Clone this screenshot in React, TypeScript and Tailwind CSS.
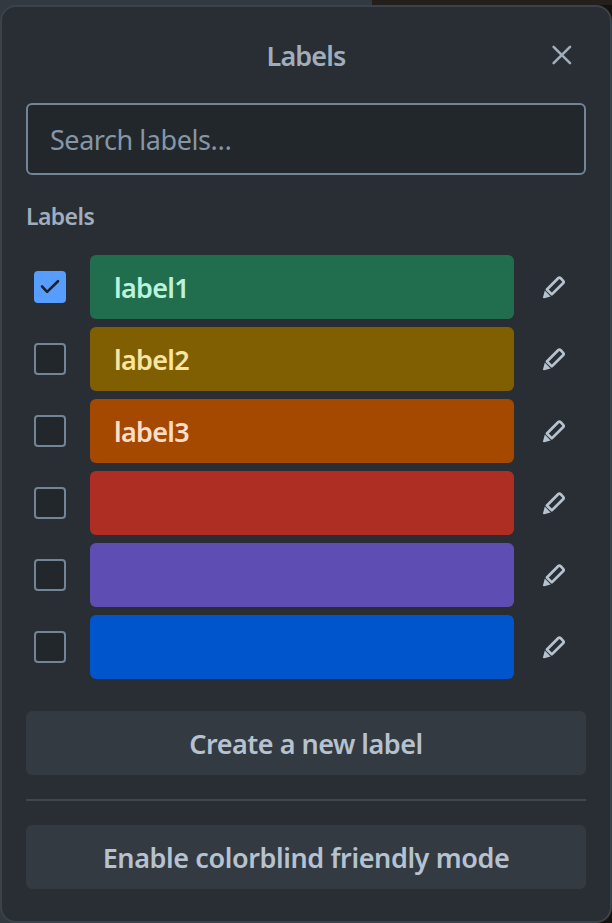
const font = "font-['Noto_Sans','Open_Sans',sans-serif]";

const labels = [
  { name: 'label1', checked: true, color: 'bg-[#216e4e] text-[#baf3db]' },
  { name: 'label2', checked: false, color: 'bg-[#7f5f01] text-[#f8e6a0]' },
  { name: 'label3', checked: false, color: 'bg-[#a54800] text-[#fedec8]' },
  { name: '', checked: false, color: 'bg-[#ae2e24]' },
  { name: '', checked: false, color: 'bg-[#5e4db2]' },
  { name: '', checked: false, color: 'bg-[#0055cc]' },
];

function Pencil() {
  return (
    <svg className="h-8 w-8" viewBox="0 0 32 32" fill="none">
      <path d="M8.9 18.5 20.1 7.3Q21.4 6 22.7 7.3L25 9.6Q26.3 10.9 25 12.2L13.8 23.4Z" stroke="#b6c2cf" strokeWidth="2.7" strokeLinejoin="round" />
      <path d="M6.8 19.6 12.6 25.4 6.2 27.3Q4.8 27.6 5 26.2Z" fill="#b6c2cf" />
    </svg>
  );
}

function Checkbox({ checked }: { checked: boolean }) {
  if (!checked) return <span className="h-8 w-8 rounded-[4px] border-2 border-[#738496] bg-[#22272b]" />;
  return (
    <span className="h-8 w-8 rounded-[4px] bg-[#579dff]">
      <svg viewBox="0 0 32 32" fill="none">
        <path d="M8 15.4 13.1 20.9 24 10.2" stroke="#1d2125" strokeWidth="2.6" strokeLinecap="round" strokeLinejoin="round" />
      </svg>
    </span>
  );
}

export default function App() {
  return (
    <div className={`h-[923px] w-[612px] overflow-hidden bg-[linear-gradient(90deg,#323940_372px,#241f1b_372px)] pt-[5px] ${font}`}>
      <div className="h-[918px] bg-[linear-gradient(90deg,#323940_50%,#16130f_50%)]">
        <section className="flex h-[918px] w-[612px] flex-col rounded-[16px] border-2 border-[#3b434a] bg-[#282e33] px-6 text-[#b6c2cf]">
          <header className="flex h-24 items-center">
            <span className="w-12" />
            <h2 className="flex-1 pt-[2px] text-center text-[27px] font-semibold tracking-[-0.9px] text-[#9fadbc]">Labels</h2>
            <button className="flex w-12 justify-center">
              <svg className="h-8 w-8" viewBox="0 0 32 32" fill="none">
                <path d="m7.6 7.8 16.4 16.4M24 7.8 7.6 24.2" stroke="#9fadbc" strokeWidth="2.6" strokeLinecap="round" />
              </svg>
            </button>
          </header>
          <div className="flex h-[72px] shrink-0 items-center rounded-[6px] border-2 border-[#738496] bg-[#22272b] px-[22px] pt-[2px] text-[27px] tracking-[-0.45px] text-[#8696a7]">Search labels…</div>
          <h3 className="mt-[23px] h-9 text-[23px] leading-9 font-semibold tracking-[-0.6px] text-[#9fadbc]">Labels</h3>
          <ul className="mt-[21px] flex flex-col gap-2">
            {labels.map((l, i) => (
              <li key={i} className="flex h-16 items-center">
                <span className="flex w-16 pl-2"><Checkbox checked={l.checked} /></span>
                <span className={`flex h-16 w-[424px] items-center rounded-[6px] px-6 pt-[2px] text-[27px] font-semibold tracking-[-0.7px] ${l.color}`}>{l.name}</span>
                <button className="ml-6 flex"><Pencil /></button>
              </li>
            ))}
          </ul>
          <button className="mt-8 h-16 shrink-0 rounded-[6px] bg-[#333a41] pt-[2px] text-[27px] font-semibold tracking-[-0.5px]">Create a new label</button>
          <hr className="my-6 border-t-2 border-[#3f464d]" />
          <button className="h-16 shrink-0 rounded-[6px] bg-[#333a41] pt-[2px] text-[27px] font-semibold tracking-[-0.4px]">Enable colorblind friendly mode</button>
        </section>
      </div>
    </div>
  );
}
